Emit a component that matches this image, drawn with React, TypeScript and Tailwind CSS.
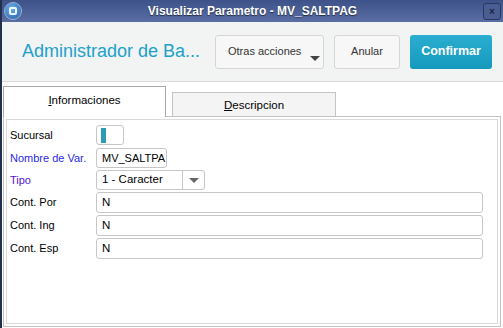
import React from "react"

const font = "font-['Liberation_Sans',Arial,sans-serif]"

function Field({ label, color = "text-black", children, className = "" }: { label: string; color?: string; children: React.ReactNode; className?: string }) {
  return (
    <div className={`flex h-[20px] items-center ${className}`}>
      <span className={`w-[86px] shrink-0 text-[11px] ${color}`}>{label}</span>
      {children}
    </div>
  )
}

function TextBox({ value, className = "" }: { value: string; className?: string }) {
  return (
    <div className={`flex h-full items-center overflow-hidden whitespace-nowrap rounded-[3px] border border-[#c6c6c6] bg-white pl-[5px] text-[11.5px] text-black ${className}`}>
      {value}
    </div>
  )
}

export default function App() {
  return (
    <div className={`${font} flex h-[328px] w-[503px] overflow-hidden bg-white`}>
      <div className="w-[2px] shrink-0 bg-[#22304f]" />
      <div className="flex min-w-0 flex-1 flex-col">
        {/* title bar */}
        <div className="relative flex h-[22px] shrink-0 items-center justify-center bg-gradient-to-b from-[#3d5289] to-[#5a6ea4]">
          <div className="absolute left-[2px] top-[2px] flex h-[18px] w-[18px] items-center justify-center rounded-full border border-[#9fb3d6] bg-[radial-gradient(circle_at_40%_35%,#6fb1ec,#1d5ca8)]">
            <div className="h-[8px] w-[8px] rounded-[2px] border-2 border-white/90" />
          </div>
          <span className="text-[12px] font-bold text-white [text-shadow:0_1px_1px_rgba(0,0,0,0.6)]">Visualizar Parametro - MV_SALTPAG</span>
          <div className="absolute right-[2px] top-[3px] flex h-[17px] w-[18px] items-center justify-center rounded-[3px] border border-[#2a3760] bg-[#4b5e93] text-[10px] font-bold leading-none text-[#1a2340]">
            ×
          </div>
        </div>

        {/* header */}
        <div className="flex h-[60px] shrink-0 items-center border-b border-[#dcdcdc] bg-[#f2f3f3] pl-[20px] pr-[11px]">
          <h1 className="flex-1 text-[18px] text-[#1ca2c9]">Administrador de Ba...</h1>
          <div className="flex gap-[10px]">
            <div className="relative flex h-[34px] w-[109px] items-center whitespace-nowrap rounded-[3px] border border-[#d6d6d6] bg-[#f7f7f7] pl-[12px] text-[11px] text-[#333]">
              Otras acciones
              <div className="absolute bottom-[7px] right-[3px] h-0 w-0 border-x-[5px] border-t-[5px] border-x-transparent border-t-[#444]" />
            </div>
            <div className="flex h-[34px] w-[66px] items-center justify-center rounded-[3px] border border-[#d6d6d6] bg-[#f7f7f7] text-[11px] text-[#333]">
              Anular
            </div>
            <div className="flex h-[34px] w-[82px] items-center justify-center rounded-[3px] bg-gradient-to-b from-[#2aaed0] to-[#1499bd] text-[12.5px] font-bold text-white">
              Confirmar
            </div>
          </div>
        </div>

        {/* tabs */}
        <div className="mt-[4px] flex h-[30px] shrink-0 items-end gap-[6px] pl-[1px]">
          <div className="relative z-10 -mb-[1px] flex h-[31px] w-[163px] items-center justify-center border border-b-0 border-[#a9a9a9] bg-white pb-[2px] text-[11.5px] text-black">
            <span><u>I</u>nformaciones</span>
          </div>
          <div className="flex h-[24px] w-[164px] items-center justify-center border border-b-0 border-[#c4c4c4] bg-[#f4f4f4] pt-[2px] text-[11.5px] text-black">
            <span><u>D</u>escripcion</span>
          </div>
        </div>

        {/* panel */}
        <div className="mb-[1px] ml-[1px] mr-[2px] flex flex-1 flex-col border border-[#c2c2c2] p-[2px]">
          <div className="flex flex-1 flex-col gap-[2px] border border-[#dadada] bg-white pl-[3px] pr-[14px] pt-[5px]">
            <Field label="Sucursal" className="mb-[1px]">
              <div className="flex h-full w-[28px] items-center rounded-[3px] border border-[#c6c6c6] bg-white pl-[4px]">
                <div className="h-[15px] w-[5px] bg-[#2e9bb2]" />
              </div>
            </Field>
            <Field label="Nombre de Var." color="text-[#2a2ae6]">
              <TextBox value="MV_SALTPA" className="w-[71px] pl-[4px] text-[11px]" />
            </Field>
            <Field label="Tipo" color="text-[#5014d8]">
              <div className="flex h-full w-[109px] items-center rounded-[3px] border border-[#c6c6c6] bg-white">
                <span className="flex-1 pl-[5px] text-[11.5px] text-black">1 - Caracter</span>
                <div className="flex h-full w-[22px] items-center justify-center border-l border-[#c6c6c6]">
                  <div className="h-0 w-0 border-x-[5px] border-t-[5px] border-x-transparent border-t-[#666]" />
                </div>
              </div>
            </Field>
            <Field label="Cont. Por" className="h-[21px]">
              <TextBox value="N" className="flex-1" />
            </Field>
            <Field label="Cont. Ing" className="h-[21px]">
              <TextBox value="N" className="flex-1" />
            </Field>
            <Field label="Cont. Esp" className="h-[21px]">
              <TextBox value="N" className="flex-1" />
            </Field>
          </div>
        </div>
      </div>
    </div>
  )
}
